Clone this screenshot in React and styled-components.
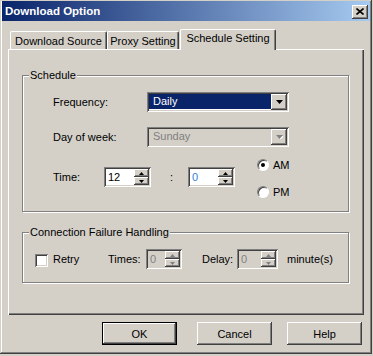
import React from "react";
import styled, { createGlobalStyle } from "styled-components";

const Global = createGlobalStyle`
  html, body { margin: 0; padding: 0; background: #d4d0c8; }
  body { font-family: "Liberation Sans", Arial, sans-serif; font-size: 11px; color: #000; }
  * { box-sizing: border-box; }
`;

const raised = `box-shadow: inset -1px -1px #404040, inset 1px 1px #fff, inset -2px -2px #808080, inset 2px 2px #d4d0c8;`;
const sunken = `box-shadow: inset 1px 1px #808080, inset -1px -1px #fff, inset 2px 2px #404040, inset -2px -2px #d4d0c8;`;

const Window = styled.div`
  width: 372px;
  height: 354px;
  background: #d4d0c8;
  padding: 1px 2px 2px 2px;
  box-shadow: inset -1px -1px #404040, inset 1px 1px #d4d0c8, inset -2px -2px #808080, inset 2px 2px #fff;
  display: flex;
  flex-direction: column;
`;

const TitleBar = styled.div`
  height: 20px;
  background: linear-gradient(to right, #0a246a, #a6caf0);
  display: flex;
  align-items: center;
  justify-content: space-between;
  padding: 0 2px 0 2px;
`;

const Title = styled.span`
  color: #fff;
  font-weight: bold;
  font-size: 11.5px;
  line-height: 14px;
  padding-left: 1px;
`;

const CloseButton = styled.div`
  width: 16px;
  height: 14px;
  background: #d4d0c8;
  ${raised}
  display: flex;
  align-items: center;
  justify-content: center;
  margin-top: 1px;
`;

const Content = styled.div`
  padding: 0 6px;
  display: flex;
  flex-direction: column;
`;

const TabStrip = styled.div`
  display: flex;
  align-items: flex-end;
  margin-top: 8px;
  padding-left: 2px;
  height: 20px;
`;

const Tab = styled.div`
  width: ${(p) => p.$w}px;
  height: ${(p) => (p.$active ? 21 : 18)}px;
  margin-left: ${(p) => p.$ml || 0}px;
  margin-bottom: ${(p) => (p.$active ? -1 : 0)}px;
  position: relative;
  z-index: ${(p) => (p.$active ? 2 : 0)};
  background: #d4d0c8;
  border-left: 1px solid #fff;
  border-top: 1px solid #fff;
  border-right: 1px solid #404040;
  border-radius: 2px 2px 0 0;
  box-shadow: inset -1px 0 #808080;
  text-align: center;
  padding-top: ${(p) => (p.$active ? 2 : 3)}px;
  line-height: 13px;
  white-space: nowrap;
`;

const Panel = styled.div`
  height: 266px;
  position: relative;
  z-index: 1;
  background: #d4d0c8;
  box-shadow: inset 1px 1px #fff, inset -1px -1px #404040, inset -2px -2px #808080;
  padding: 26px 15px 0 14px;
  display: flex;
  flex-direction: column;
`;

const Group = styled.div`
  position: relative;
  height: ${(p) => p.$h}px;
  margin-top: ${(p) => p.$mt || 0}px;
  border: 1px solid #808080;
  box-shadow: inset 1px 1px #fff, 1px 1px #fff;
  padding: ${(p) => p.$pad};
  display: flex;
  flex-direction: column;
`;

const Caption = styled.span`
  position: absolute;
  top: -8px;
  left: 6px;
  padding: 0 1px;
  background: #d4d0c8;
  line-height: 14px;
`;

const Row = styled.div`
  display: flex;
  align-items: ${(p) => p.$align || "center"};
  height: 20px;
  margin-top: ${(p) => p.$mt || 0}px;
`;

const Label = styled.span`
  width: ${(p) => p.$w}px;
  margin-left: ${(p) => p.$ml || 0}px;
  flex: none;
  white-space: nowrap;
  line-height: 20px;
`;

const Combo = styled.div`
  width: 142px;
  height: 20px;
  padding: 2px;
  ${sunken}
  background: ${(p) => (p.$disabled ? "#d4d0c8" : "#fff")};
  display: flex;
`;

const ComboText = styled.div`
  flex: 1;
  height: 15px;
  background: ${(p) => (p.$selected ? "#0a246a" : "transparent")};
  color: ${(p) => (p.$selected ? "#fff" : "#808080")};
  padding-left: 4px;
  line-height: 15px;
`;

const DropButton = styled.div`
  width: 16px;
  height: 16px;
  background: #d4d0c8;
  ${raised}
  display: flex;
  align-items: center;
  justify-content: center;
`;

const Spin = styled.div`
  width: ${(p) => p.$w}px;
  height: 20px;
  padding: 2px;
  ${sunken}
  background: ${(p) => (p.$disabled ? "#d4d0c8" : "#fff")};
  display: flex;
  flex: none;
`;

const SpinText = styled.div`
  flex: 1;
  padding-left: 2px;
  line-height: 16px;
  color: ${(p) => p.$color || "#000"};
`;

const SpinButtons = styled.div`
  width: 15px;
  display: flex;
  flex-direction: column;
`;

const SpinBtn = styled.div`
  height: 8px;
  background: #d4d0c8;
  ${raised}
  display: flex;
  align-items: center;
  justify-content: center;
`;

const Colon = styled.span`
  width: 37px;
  padding-left: 19px;
  flex: none;
`;

const RadioCol = styled.div`
  display: flex;
  flex-direction: column;
  gap: 14px;
  margin-left: 22px;
  margin-top: -9px;
  align-self: flex-start;
`;

const RadioRow = styled.div`
  display: flex;
  align-items: center;
  height: 13px;
  gap: 4px;
`;

const Radio = styled.div`
  width: 12px;
  height: 12px;
  border-radius: 50%;
  background: #fff;
  border: 1px solid;
  border-color: #808080 #fff #fff #808080;
  box-shadow: inset 1px 1px #404040;
  display: flex;
  align-items: center;
  justify-content: center;
  &::after {
    content: "";
    display: ${(p) => (p.$checked ? "block" : "none")};
    width: 4px;
    height: 4px;
    border-radius: 50%;
    background: #000;
  }
`;

const Checkbox = styled.div`
  width: 13px;
  height: 13px;
  flex: none;
  background: #fff;
  ${sunken}
  margin-top: 3px;
`;

const ButtonRow = styled.div`
  display: flex;
  margin-top: 7px;
  padding-left: 94px;
`;

const Button = styled.div`
  width: 75px;
  height: 23px;
  margin-left: ${(p) => p.$ml || 0}px;
  background: #d4d0c8;
  ${(p) =>
    p.$default
      ? `box-shadow: inset 0 0 0 1px #000, inset -2px -2px #404040, inset 2px 2px #fff, inset -3px -3px #808080;`
      : raised}
  display: flex;
  align-items: center;
  justify-content: center;
`;

const CloseX = () => (
  <svg width="8" height="7" viewBox="0 0 8 7">
    <path d="M0.5 0.5 L7.5 6.5 M7.5 0.5 L0.5 6.5" stroke="#000" strokeWidth="1.6" />
  </svg>
);

const DownArrow = ({ color = "#000" }) => (
  <svg width="7" height="4" viewBox="0 0 7 4">
    {color !== "#000" && <path d="M1 1 H8 L4.5 4.5 Z" fill="#fff" />}
    <path d="M0 0 H7 L3.5 4 Z" fill={color} />
  </svg>
);

const TinyArrow = ({ up, color = "#000" }) => (
  <svg width="5" height="3" viewBox="0 0 5 3">
    <path d={up ? "M2.5 0 L5 3 H0 Z" : "M0 0 H5 L2.5 3 Z"} fill={color} />
  </svg>
);

const SpinBox = ({ w, value, disabled, color }) => (
  <Spin $w={w} $disabled={disabled}>
    <SpinText $color={disabled ? "#808080" : color}>{value}</SpinText>
    <SpinButtons>
      <SpinBtn>
        <TinyArrow up color={disabled ? "#808080" : "#000"} />
      </SpinBtn>
      <SpinBtn>
        <TinyArrow color={disabled ? "#808080" : "#000"} />
      </SpinBtn>
    </SpinButtons>
  </Spin>
);

export default function App() {
  return (
    <>
      <Global />
      <Window>
        <TitleBar>
          <Title>Download Option</Title>
          <CloseButton>
            <CloseX />
          </CloseButton>
        </TitleBar>
        <Content>
          <TabStrip>
            <Tab $w={97}>Download Source</Tab>
            <Tab $w={72}>Proxy Setting</Tab>
            <Tab $w={96} $ml={1} $active>
              Schedule Setting
            </Tab>
          </TabStrip>
          <Panel>
            <Group $h={137} $pad="16px 0 0 30px">
              <Caption>Schedule</Caption>
              <Row>
                <Label $w={94}>Frequency:</Label>
                <Combo>
                  <ComboText $selected>Daily</ComboText>
                  <DropButton>
                    <DownArrow />
                  </DropButton>
                </Combo>
              </Row>
              <Row $mt={15}>
                <Label $w={94}>Day of week:</Label>
                <Combo $disabled>
                  <ComboText>Sunday</ComboText>
                  <DropButton>
                    <DownArrow color="#808080" />
                  </DropButton>
                </Combo>
              </Row>
              <Row $mt={20}>
                <Label $w={51}>Time:</Label>
                <SpinBox w={47} value="12" />
                <Colon>:</Colon>
                <SpinBox w={47} value="0" color="#2f7fd8" />
                <RadioCol>
                  <RadioRow>
                    <Radio $checked />
                    <span>AM</span>
                  </RadioRow>
                  <RadioRow>
                    <Radio />
                    <span>PM</span>
                  </RadioRow>
                </RadioCol>
              </Row>
            </Group>
            <Group $h={51} $mt={20} $pad="16px 0 0 12px">
              <Caption>Connection Failure Handling</Caption>
              <Row>
                <Checkbox />
                <Label $w={55} $ml={5}>Retry</Label>
                <Label $w={38}>Times:</Label>
                <SpinBox w={36} value="0" disabled />
                <Label $w={35} $ml={20}>Delay:</Label>
                <SpinBox w={41} value="0" disabled />
                <Label $w={50} $ml={9}>minute(s)</Label>
              </Row>
            </Group>
          </Panel>
          <ButtonRow>
            <Button $default>OK</Button>
            <Button $ml={20}>Cancel</Button>
            <Button $ml={15}>Help</Button>
          </ButtonRow>
        </Content>
      </Window>
    </>
  );
}
